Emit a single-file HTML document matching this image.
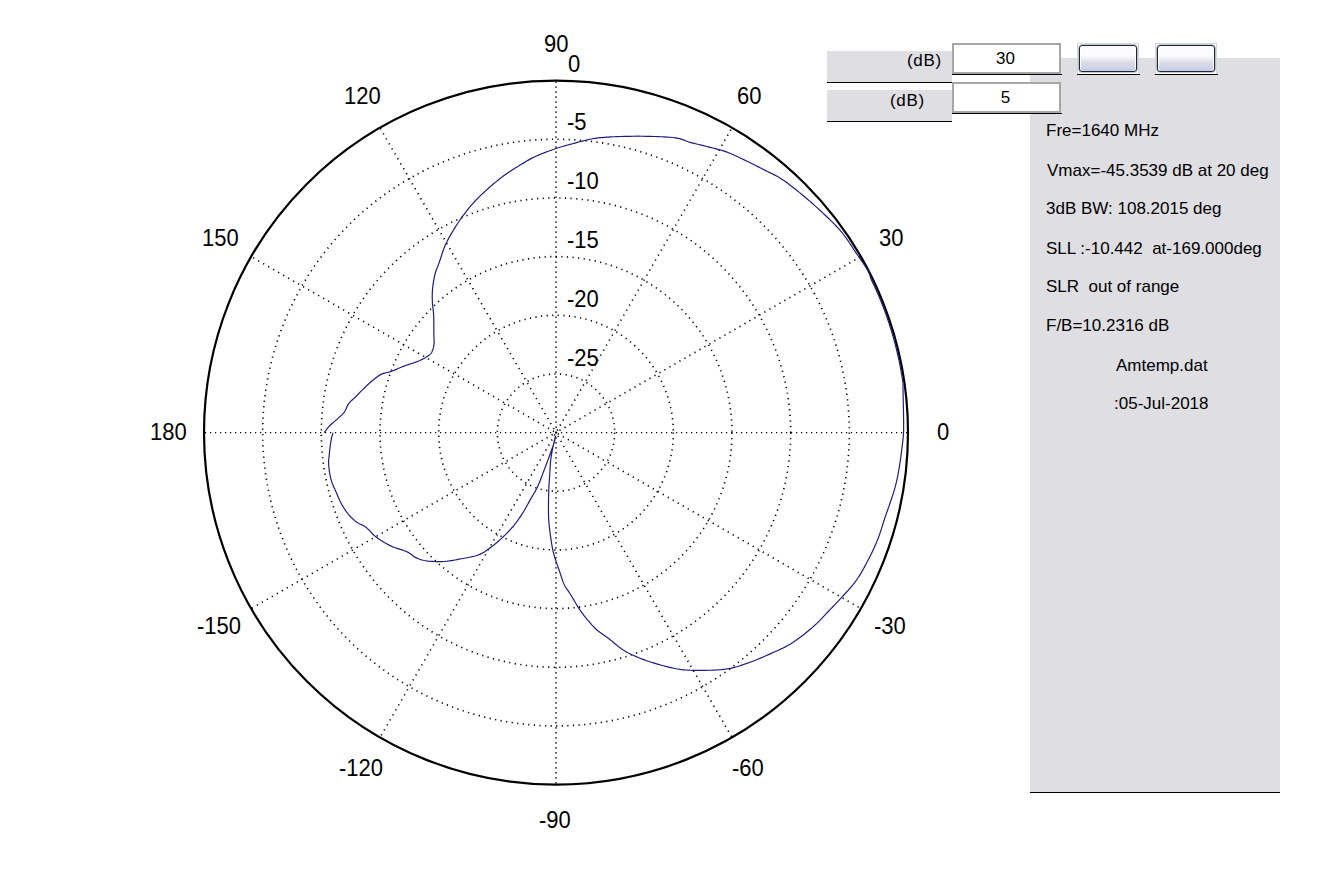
<!DOCTYPE html>
<html><head><meta charset="utf-8">
<style>
html,body{margin:0;padding:0;background:#fff;width:1317px;height:885px;overflow:hidden;position:relative;font-family:"Liberation Sans",sans-serif;}
svg{position:absolute;left:0;top:0;}
.dot{fill:none;stroke:#000;stroke-width:1.65;stroke-dasharray:1.2 3.8;}
.lab{position:absolute;font-size:22px;line-height:22px;color:#000;white-space:nowrap;transform:scaleY(1.0667);transform-origin:0 0;}
.panel{position:absolute;background:#dfdee3;}
.hl{position:absolute;height:1px;background:#000;}
.edit{position:absolute;background:#fff;border:2px solid #a6a6a6;box-sizing:border-box;font-size:17px;text-align:center;padding-right:2px;}
.btn{position:absolute;box-sizing:border-box;background:#fff;border:1px solid #d2d7df;border-bottom:none;}
.btn div{position:absolute;box-sizing:border-box;left:1px;top:1px;width:58px;height:27px;border:1px solid #1f2738;box-shadow:0 0 0 0.6px rgba(50,60,80,0.55),inset 1px 0 0 #fff,inset -1px 0 0 #fff;border-radius:3px;background:linear-gradient(#fdfdfe 0%,#fbfbfd 40%,#ebebf1 52%,#dcdce7 66%,#d2d5e6 82%,#c3caee 100%);}
.ptxt{position:absolute;font-size:17px;line-height:17px;color:#000;white-space:nowrap;}
</style></head><body>
<svg width="1317" height="885" viewBox="0 0 1317 885">
<circle cx="556.0" cy="432.6" r="58.67" class="dot" style="stroke-dasharray:1.2 4.4"/>
<circle cx="556.0" cy="432.6" r="117.33" class="dot" style="stroke-dasharray:1.2 4.4"/>
<circle cx="556.0" cy="432.6" r="176.00" class="dot" style="stroke-dasharray:1.2 4.4"/>
<circle cx="556.0" cy="432.6" r="234.67" class="dot" style="stroke-dasharray:1.2 4.4"/>
<circle cx="556.0" cy="432.6" r="293.33" class="dot" style="stroke-dasharray:1.2 4.4"/>
<line x1="556.00" y1="432.60" x2="908.00" y2="432.60" class="dot" style="stroke-width:1.2;stroke-dashoffset:0.0"/>
<line x1="556.00" y1="432.60" x2="860.84" y2="256.60" class="dot" style="stroke-dasharray:1.2 4.57;stroke-dashoffset:1.7"/>
<line x1="556.00" y1="432.60" x2="732.00" y2="127.76" class="dot" style="stroke-dasharray:1.2 4.57;stroke-dashoffset:3.4"/>
<line x1="556.00" y1="432.60" x2="556.00" y2="80.60" class="dot" style="stroke-dashoffset:0.1"/>
<line x1="556.00" y1="432.60" x2="380.00" y2="127.76" class="dot" style="stroke-dasharray:1.2 4.57;stroke-dashoffset:1.8"/>
<line x1="556.00" y1="432.60" x2="251.16" y2="256.60" class="dot" style="stroke-dasharray:1.2 4.57;stroke-dashoffset:3.5"/>
<line x1="556.00" y1="432.60" x2="204.00" y2="432.60" class="dot" style="stroke-width:1.2;stroke-dashoffset:0.2"/>
<line x1="556.00" y1="432.60" x2="251.16" y2="608.60" class="dot" style="stroke-dasharray:1.2 4.57;stroke-dashoffset:1.9"/>
<line x1="556.00" y1="432.60" x2="380.00" y2="737.44" class="dot" style="stroke-dasharray:1.2 4.57;stroke-dashoffset:3.6"/>
<line x1="556.00" y1="432.60" x2="556.00" y2="784.60" class="dot" style="stroke-dashoffset:0.3"/>
<line x1="556.00" y1="432.60" x2="732.00" y2="737.44" class="dot" style="stroke-dasharray:1.2 4.57;stroke-dashoffset:2.0"/>
<line x1="556.00" y1="432.60" x2="860.84" y2="608.60" class="dot" style="stroke-dasharray:1.2 4.57;stroke-dashoffset:3.7"/>
<circle cx="556.0" cy="432.6" r="352.0" fill="none" stroke="#000" stroke-width="2.2"/>
<polyline points="324.10,432.60 324.72,431.81 325.33,431.03 325.92,430.25 326.52,429.47 327.14,428.69 327.78,427.90 328.46,427.10 329.20,426.30 330.20,425.29 331.30,424.26 332.47,423.22 333.68,422.17 334.90,421.12 336.09,420.09 337.24,419.08 338.30,418.10 339.14,417.32 339.97,416.57 340.78,415.84 341.57,415.12 342.33,414.39 343.05,413.63 343.75,412.84 344.40,412.00 345.00,411.07 345.52,410.08 345.98,409.04 346.43,407.98 346.87,406.92 347.34,405.88 347.88,404.86 348.50,403.90 349.25,402.95 350.06,402.04 350.93,401.15 351.84,400.29 352.78,399.44 353.73,398.58 354.67,397.70 355.60,396.80 356.59,395.80 357.60,394.77 358.62,393.72 359.64,392.67 360.67,391.63 361.69,390.59 362.70,389.58 363.70,388.60 364.59,387.73 365.46,386.89 366.31,386.06 367.16,385.25 368.03,384.44 368.91,383.63 369.83,382.82 370.80,382.00 371.96,381.02 373.17,380.00 374.42,378.95 375.70,377.92 377.00,376.92 378.33,375.98 379.66,375.13 381.00,374.40 382.23,373.86 383.46,373.42 384.71,373.07 385.97,372.77 387.24,372.48 388.54,372.18 389.86,371.83 391.20,371.40 392.85,370.78 394.57,370.09 396.33,369.34 398.12,368.57 399.90,367.79 401.66,367.04 403.36,366.33 405.00,365.70 406.32,365.23 407.62,364.81 408.89,364.41 410.14,364.03 411.37,363.67 412.58,363.29 413.75,362.91 414.90,362.50 415.89,362.13 416.87,361.74 417.83,361.35 418.77,360.96 419.69,360.57 420.57,360.17 421.41,359.78 422.20,359.40 422.76,359.12 423.29,358.84 423.79,358.58 424.27,358.31 424.74,358.03 425.22,357.74 425.70,357.44 426.20,357.10 426.84,356.66 427.52,356.19 428.23,355.68 428.93,355.16 429.60,354.63 430.22,354.10 430.76,353.59 431.20,353.10 431.41,352.81 431.59,352.53 431.73,352.25 431.86,351.98 431.97,351.70 432.07,351.41 432.18,351.11 432.30,350.80 432.46,350.39 432.63,349.97 432.79,349.53 432.95,349.08 433.10,348.61 433.25,348.15 433.38,347.67 433.50,347.20 433.61,346.70 433.71,346.21 433.80,345.71 433.88,345.20 433.95,344.68 434.01,344.14 434.06,343.58 434.10,343.00 434.13,342.21 434.13,341.41 434.11,340.58 434.07,339.71 434.02,338.80 433.98,337.84 433.93,336.81 433.90,335.70 433.87,333.55 433.85,331.06 433.85,328.34 433.84,325.48 433.81,322.58 433.77,319.74 433.71,317.04 433.60,314.60 433.48,312.89 433.33,311.25 433.16,309.68 432.98,308.16 432.80,306.66 432.63,305.18 432.50,303.70 432.40,302.20 432.34,300.77 432.29,299.34 432.26,297.93 432.25,296.52 432.26,295.12 432.28,293.74 432.33,292.36 432.40,291.00 432.49,289.73 432.60,288.46 432.73,287.21 432.88,285.96 433.04,284.73 433.21,283.51 433.40,282.30 433.60,281.10 433.79,279.98 433.99,278.89 434.20,277.81 434.41,276.73 434.65,275.66 434.91,274.59 435.19,273.50 435.50,272.40 435.88,271.20 436.29,270.02 436.73,268.84 437.19,267.65 437.68,266.44 438.18,265.18 438.69,263.88 439.20,262.50 439.88,260.55 440.57,258.45 441.28,256.25 442.01,253.99 442.78,251.70 443.57,249.43 444.41,247.22 445.30,245.10 446.20,243.15 447.14,241.24 448.12,239.35 449.13,237.50 450.17,235.66 451.23,233.84 452.31,232.02 453.40,230.20 454.51,228.38 455.63,226.57 456.78,224.78 457.94,222.99 459.13,221.22 460.36,219.44 461.61,217.67 462.90,215.90 464.31,214.02 465.75,212.12 467.23,210.23 468.75,208.34 470.29,206.47 471.87,204.61 473.47,202.79 475.10,201.00 476.80,199.21 478.57,197.43 480.39,195.65 482.23,193.91 484.07,192.21 485.88,190.57 487.63,188.99 489.30,187.50 490.57,186.38 491.80,185.31 493.00,184.29 494.18,183.30 495.35,182.34 496.52,181.39 497.70,180.45 498.90,179.50 500.09,178.57 501.28,177.64 502.47,176.73 503.66,175.83 504.87,174.94 506.09,174.06 507.33,173.18 508.60,172.30 509.97,171.38 511.36,170.47 512.77,169.57 514.20,168.68 515.64,167.79 517.11,166.90 518.60,166.00 520.10,165.10 521.73,164.11 523.36,163.12 525.00,162.11 526.67,161.11 528.38,160.12 530.15,159.13 531.98,158.15 533.90,157.20 536.40,156.04 539.05,154.88 541.83,153.73 544.68,152.60 547.56,151.50 550.44,150.45 553.26,149.44 556.00,148.50 558.41,147.71 560.79,146.96 563.14,146.27 565.48,145.61 567.81,144.97 570.15,144.34 572.51,143.72 574.90,143.10 577.37,142.44 579.83,141.78 582.30,141.11 584.79,140.46 587.30,139.85 589.85,139.27 592.44,138.75 595.10,138.30 598.11,137.89 601.16,137.55 604.26,137.28 607.42,137.06 610.62,136.89 613.89,136.75 617.21,136.62 620.60,136.50 624.66,136.38 628.90,136.29 633.27,136.23 637.69,136.21 642.10,136.23 646.43,136.28 650.62,136.37 654.60,136.50 657.79,136.62 660.95,136.74 664.05,136.87 667.08,137.03 670.01,137.25 672.83,137.52 675.49,137.86 678.00,138.30 679.69,138.69 681.25,139.15 682.70,139.65 684.11,140.18 685.50,140.72 686.92,141.27 688.40,141.80 690.00,142.30 692.09,142.88 694.27,143.44 696.54,143.99 698.86,144.54 701.21,145.09 703.56,145.64 705.90,146.21 708.20,146.80 710.48,147.39 712.77,147.97 715.05,148.55 717.33,149.14 719.61,149.76 721.88,150.41 724.15,151.12 726.40,151.90 728.71,152.78 731.01,153.72 733.31,154.72 735.59,155.76 737.87,156.83 740.15,157.92 742.43,159.01 744.70,160.10 746.99,161.19 749.27,162.31 751.55,163.44 753.82,164.58 756.09,165.72 758.36,166.88 760.63,168.04 762.90,169.20 765.19,170.35 767.48,171.47 769.77,172.59 772.06,173.71 774.34,174.87 776.62,176.08 778.87,177.35 781.10,178.70 783.42,180.21 785.71,181.80 787.98,183.45 790.23,185.16 792.48,186.92 794.74,188.72 797.01,190.55 799.30,192.40 801.81,194.44 804.33,196.53 806.86,198.67 809.41,200.84 811.95,203.07 814.50,205.33 817.05,207.64 819.60,210.00 822.40,212.61 825.26,215.30 828.16,218.04 831.04,220.84 833.88,223.67 836.62,226.51 839.25,229.36 841.70,232.20 843.74,234.75 845.66,237.32 847.49,239.90 849.24,242.50 850.95,245.09 852.62,247.68 854.30,250.25 856.00,252.80 857.70,255.26 859.47,257.79 861.27,260.34 863.03,262.86 864.70,265.31 866.22,267.65 867.54,269.83 868.60,271.80 869.06,272.82 869.42,273.75 869.71,274.62 869.94,275.46 870.17,276.29 870.40,277.13 870.68,278.01 871.03,278.95 871.56,280.23 872.17,281.56 872.81,282.94 873.49,284.34 874.18,285.77 874.88,287.20 875.55,288.63 876.20,290.04 876.82,291.44 877.43,292.84 878.04,294.24 878.64,295.65 879.23,297.06 879.82,298.47 880.40,299.88 880.98,301.30 881.55,302.72 882.11,304.14 882.67,305.57 883.22,306.99 883.76,308.42 884.30,309.85 884.84,311.29 885.36,312.72 885.88,314.16 886.40,315.60 886.90,317.04 887.40,318.49 887.90,319.94 888.39,321.38 888.87,322.84 889.35,324.29 889.81,325.74 890.28,327.20 890.73,328.66 891.18,330.12 891.63,331.59 892.07,333.05 892.50,334.52 892.92,335.99 893.34,337.46 893.75,338.93 894.16,340.41 894.56,341.88 894.95,343.36 895.34,344.84 895.72,346.32 896.09,347.81 896.46,349.29 896.82,350.78 897.17,352.27 897.52,353.75 897.86,355.25 898.19,356.74 898.52,358.23 898.84,359.73 899.16,361.22 899.46,362.72 899.77,364.22 900.06,365.72 900.35,367.22 900.63,368.73 900.91,370.23 901.18,371.74 901.45,373.30 901.75,374.93 902.05,376.60 902.33,378.26 902.59,379.85 902.81,381.34 902.98,382.68 903.09,383.82 903.11,384.29 903.11,384.67 903.10,385.00 903.08,385.31 903.06,385.63 903.03,386.00 903.01,386.44 903.00,387.00 903.03,390.21 903.12,394.95 903.25,400.76 903.39,407.19 903.52,413.78 903.62,420.08 903.65,425.64 903.60,430.00 903.55,431.67 903.49,433.10 903.43,434.35 903.35,435.52 903.26,436.69 903.14,437.93 902.99,439.34 902.80,441.00 902.35,444.91 901.79,449.52 901.14,454.64 900.39,460.12 899.53,465.78 898.58,471.46 897.54,476.99 896.40,482.20 895.13,487.13 893.67,492.12 892.08,497.12 890.42,502.06 888.75,506.88 887.11,511.51 885.58,515.91 884.20,520.00 883.33,522.69 882.54,525.22 881.79,527.62 881.06,529.93 880.34,532.19 879.58,534.43 878.78,536.69 877.90,539.00 876.94,541.39 875.95,543.76 874.92,546.11 873.86,548.47 872.76,550.82 871.62,553.19 870.43,555.58 869.20,558.00 867.79,560.74 866.32,563.54 864.80,566.39 863.22,569.25 861.61,572.08 859.94,574.85 858.24,577.54 856.50,580.10 854.83,582.37 853.11,584.56 851.33,586.69 849.52,588.76 847.70,590.79 845.87,592.78 844.07,594.75 842.30,596.70 840.71,598.46 839.15,600.16 837.61,601.82 836.07,603.46 834.51,605.10 832.92,606.76 831.29,608.45 829.60,610.20 827.59,612.29 825.54,614.45 823.44,616.65 821.29,618.88 819.10,621.11 816.86,623.32 814.56,625.49 812.20,627.60 809.61,629.81 806.93,632.03 804.17,634.25 801.36,636.42 798.52,638.53 795.68,640.55 792.87,642.45 790.10,644.20 787.73,645.59 785.39,646.86 783.06,648.04 780.73,649.14 778.39,650.21 776.03,651.26 773.64,652.31 771.20,653.40 768.56,654.59 765.87,655.79 763.15,656.98 760.40,658.17 757.64,659.32 754.88,660.44 752.13,661.50 749.40,662.50 746.84,663.41 744.32,664.30 741.82,665.16 739.32,665.97 736.78,666.73 734.19,667.43 731.50,668.06 728.70,668.60 725.16,669.13 721.38,669.55 717.46,669.87 713.47,670.10 709.48,670.25 705.57,670.35 701.82,670.39 698.30,670.40 695.67,670.39 693.15,670.34 690.72,670.27 688.35,670.16 686.01,670.00 683.67,669.79 681.31,669.53 678.90,669.20 676.32,668.78 673.72,668.27 671.10,667.70 668.48,667.08 665.86,666.42 663.27,665.72 660.71,665.01 658.20,664.30 655.85,663.62 653.52,662.92 651.22,662.21 648.93,661.47 646.67,660.71 644.43,659.91 642.21,659.08 640.00,658.20 637.84,657.31 635.70,656.40 633.56,655.47 631.45,654.50 629.37,653.49 627.31,652.42 625.29,651.30 623.30,650.10 621.33,648.78 619.39,647.35 617.48,645.83 615.61,644.27 613.76,642.70 611.94,641.16 610.16,639.68 608.40,638.30 606.92,637.22 605.47,636.20 604.03,635.23 602.62,634.28 601.23,633.32 599.86,632.34 598.52,631.31 597.20,630.20 595.87,628.99 594.57,627.72 593.29,626.40 592.03,625.05 590.81,623.68 589.61,622.31 588.44,620.95 587.30,619.60 586.29,618.39 585.32,617.20 584.39,616.02 583.48,614.83 582.58,613.63 581.67,612.38 580.75,611.08 579.80,609.70 578.58,607.85 577.31,605.84 576.02,603.72 574.73,601.56 573.45,599.40 572.20,597.30 571.01,595.31 569.90,593.50 569.12,592.29 568.36,591.18 567.62,590.13 566.91,589.11 566.22,588.10 565.55,587.06 564.91,585.97 564.30,584.80 563.65,583.38 563.06,581.89 562.50,580.35 561.97,578.77 561.45,577.17 560.95,575.57 560.43,573.97 559.90,572.40 559.35,570.84 558.79,569.27 558.23,567.70 557.67,566.12 557.12,564.56 556.59,563.01 556.08,561.49 555.60,560.00 555.20,558.72 554.82,557.49 554.45,556.28 554.10,555.09 553.76,553.88 553.43,552.64 553.11,551.36 552.80,550.00 552.43,548.23 552.08,546.37 551.75,544.44 551.43,542.46 551.13,540.45 550.84,538.44 550.56,536.45 550.30,534.50 550.05,532.66 549.81,530.86 549.58,529.10 549.36,527.32 549.16,525.51 548.98,523.64 548.83,521.68 548.70,519.60 548.57,516.53 548.49,513.19 548.46,509.66 548.46,506.03 548.49,502.39 548.54,498.81 548.62,495.38 548.70,492.20 548.78,489.83 548.88,487.56 549.00,485.36 549.13,483.21 549.27,481.10 549.41,479.01 549.56,476.92 549.70,474.80 549.83,472.75 549.95,470.70 550.06,468.65 550.19,466.62 550.33,464.61 550.49,462.61 550.67,460.64 550.90,458.70 551.15,456.91 551.43,455.12 551.74,453.35 552.06,451.59 552.40,449.87 552.74,448.19 553.07,446.56 553.40,445.00 553.66,443.78 553.92,442.61 554.18,441.48 554.45,440.38 554.71,439.29 554.97,438.20 555.24,437.11 555.50,436.00 555.41,436.56 555.33,437.11 555.25,437.66 555.17,438.21 555.08,438.76 554.98,439.34 554.85,439.95 554.70,440.60 554.43,441.60 554.12,442.65 553.77,443.75 553.39,444.91 552.97,446.11 552.53,447.36 552.07,448.66 551.60,450.00 550.88,452.03 550.09,454.21 549.25,456.52 548.36,458.91 547.45,461.35 546.53,463.81 545.60,466.23 544.70,468.60 543.80,470.97 542.89,473.40 541.98,475.84 541.06,478.28 540.13,480.67 539.20,482.99 538.25,485.21 537.30,487.30 536.54,488.85 535.78,490.29 535.02,491.66 534.25,492.98 533.47,494.30 532.67,495.64 531.85,497.03 531.00,498.50 529.93,500.40 528.81,502.40 527.65,504.47 526.47,506.58 525.28,508.68 524.08,510.74 522.88,512.73 521.70,514.60 520.70,516.12 519.72,517.59 518.75,519.01 517.77,520.39 516.78,521.75 515.76,523.10 514.70,524.44 513.60,525.80 512.38,527.24 511.13,528.67 509.83,530.10 508.51,531.52 507.15,532.92 505.78,534.30 504.40,535.66 503.00,537.00 501.58,538.32 500.14,539.64 498.68,540.94 497.20,542.21 495.71,543.46 494.21,544.68 492.70,545.86 491.20,547.00 489.81,548.04 488.46,549.06 487.11,550.06 485.76,551.02 484.36,551.94 482.90,552.82 481.36,553.64 479.70,554.40 477.44,555.25 474.98,556.00 472.37,556.66 469.67,557.25 466.94,557.78 464.23,558.28 461.60,558.74 459.10,559.20 457.04,559.59 455.05,559.97 453.10,560.33 451.17,560.65 449.25,560.94 447.31,561.18 445.33,561.37 443.30,561.50 440.98,561.58 438.55,561.60 436.06,561.56 433.56,561.47 431.11,561.32 428.74,561.11 426.52,560.84 424.50,560.50 423.18,560.22 421.93,559.92 420.75,559.58 419.62,559.21 418.54,558.81 417.48,558.38 416.44,557.91 415.40,557.40 414.46,556.87 413.59,556.28 412.77,555.66 411.96,555.00 411.13,554.34 410.25,553.67 409.28,553.02 408.20,552.40 406.34,551.53 404.23,550.71 401.94,549.92 399.53,549.13 397.08,548.33 394.64,547.48 392.29,546.58 390.10,545.60 388.15,544.61 386.22,543.57 384.32,542.48 382.47,541.36 380.66,540.21 378.91,539.03 377.22,537.82 375.60,536.60 374.23,535.45 372.93,534.23 371.70,532.96 370.50,531.68 369.33,530.43 368.15,529.22 366.95,528.10 365.70,527.10 364.58,526.35 363.43,525.69 362.26,525.11 361.10,524.56 359.94,524.02 358.80,523.45 357.68,522.82 356.60,522.10 355.51,521.28 354.45,520.41 353.40,519.50 352.38,518.55 351.38,517.56 350.40,516.54 349.44,515.49 348.50,514.40 347.51,513.18 346.54,511.89 345.59,510.56 344.66,509.19 343.77,507.79 342.91,506.39 342.08,504.99 341.30,503.60 340.60,502.29 339.96,500.98 339.34,499.65 338.76,498.32 338.19,496.99 337.64,495.66 337.07,494.33 336.50,493.00 335.91,491.68 335.31,490.36 334.70,489.04 334.11,487.72 333.53,486.40 332.97,485.09 332.46,483.79 332.00,482.50 331.62,481.35 331.28,480.23 330.96,479.12 330.67,478.01 330.40,476.89 330.15,475.76 329.92,474.60 329.70,473.40 329.47,471.97 329.26,470.45 329.07,468.88 328.91,467.30 328.78,465.74 328.68,464.25 328.62,462.85 328.60,461.60 328.61,460.88 328.65,460.22 328.71,459.62 328.77,459.04 328.85,458.47 328.93,457.87 329.02,457.22 329.10,456.50 329.22,455.29 329.34,453.96 329.48,452.53 329.62,451.04 329.77,449.53 329.94,448.03 330.11,446.58 330.30,445.20 330.48,443.99 330.68,442.77 330.89,441.55 331.11,440.36 331.33,439.21 331.56,438.12 331.78,437.11 332.00,436.20 332.14,435.69 332.27,435.23 332.41,434.80 332.55,434.39 332.69,434.00 332.82,433.61 332.96,433.21 333.10,432.80" fill="none" stroke="#1f1c80" stroke-width="1.2"/>
</svg>
<div class="lab" style="left:544px;top:33px">90</div>
<div class="lab" style="left:568px;top:53px">0</div>
<div class="lab" style="left:737px;top:85px">60</div>
<div class="lab" style="left:879px;top:227px">30</div>
<div class="lab" style="left:937px;top:421px">0</div>
<div class="lab" style="left:874px;top:615px">-30</div>
<div class="lab" style="left:732px;top:757px">-60</div>
<div class="lab" style="left:539px;top:809px">-90</div>
<div class="lab" style="left:339px;top:757px">-120</div>
<div class="lab" style="left:197px;top:615px">-150</div>
<div class="lab" style="left:150px;top:421px">180</div>
<div class="lab" style="left:202px;top:227px">150</div>
<div class="lab" style="left:344px;top:85px">120</div>
<div class="lab" style="left:567px;top:111px">-5</div>
<div class="lab" style="left:567px;top:170px">-10</div>
<div class="lab" style="left:567px;top:229px">-15</div>
<div class="lab" style="left:567px;top:288px">-20</div>
<div class="lab" style="left:567px;top:347px">-25</div>
<div class="panel" style="left:1030px;top:58px;width:250px;height:735px"></div>
<div class="hl" style="left:1030px;top:792px;width:250px"></div>
<div class="panel" style="left:827px;top:51px;width:125px;height:31px"></div>
<div class="hl" style="left:827px;top:82px;width:125px"></div>
<div class="panel" style="left:827px;top:90px;width:125px;height:31px"></div>
<div class="hl" style="left:827px;top:121px;width:125px"></div>
<div class="ptxt" style="left:907px;top:52px;letter-spacing:0.7px">(dB)</div>
<div class="ptxt" style="left:890px;top:92px;letter-spacing:0.7px">(dB)</div>
<div class="edit" style="left:952px;top:43px;width:109px;height:31px;line-height:27px">30</div>
<div class="hl" style="left:952px;top:74px;width:110px"></div>
<div class="edit" style="left:952px;top:82px;width:109px;height:31px;line-height:27px">5</div>
<div class="hl" style="left:952px;top:113px;width:110px"></div>
<div class="btn" style="left:1077px;top:43px;width:62px;height:31px"><div></div></div>
<div class="hl" style="left:1077px;top:74px;width:63px"></div>
<div class="btn" style="left:1155px;top:43px;width:62px;height:31px"><div></div></div>
<div class="hl" style="left:1155px;top:74px;width:63px"></div>
<div class="ptxt" style="left:1046px;top:122px">Fre=1640 MHz</div>
<div class="ptxt" style="left:1047px;top:162px">Vmax=-45.3539 dB at 20 deg</div>
<div class="ptxt" style="left:1046px;top:200px">3dB BW: 108.2015 deg</div>
<div class="ptxt" style="left:1046px;top:240px">SLL :-10.442&nbsp; at-169.000deg</div>
<div class="ptxt" style="left:1046px;top:278px">SLR&nbsp; out of range</div>
<div class="ptxt" style="left:1046px;top:317px">F/B=10.2316 dB</div>
<div class="ptxt" style="left:1116px;top:357px">Amtemp.dat</div>
<div class="ptxt" style="left:1114px;top:395px">:05-Jul-2018</div>
</body></html>
